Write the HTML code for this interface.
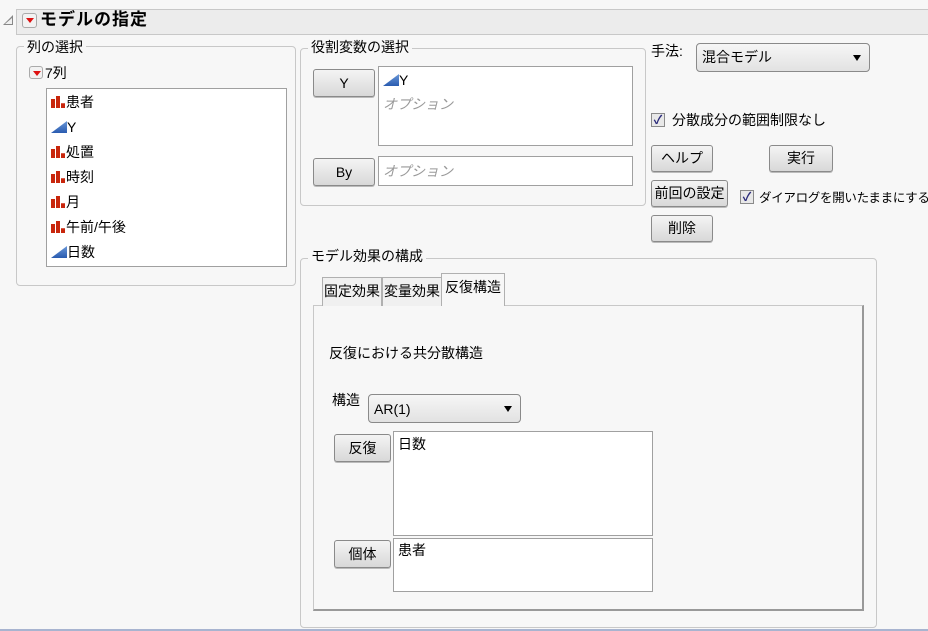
<!DOCTYPE html>
<html><head><meta charset="utf-8"><style>
*{box-sizing:border-box;margin:0;padding:0}
body{width:928px;height:631px;background:#f7f7f7;font-family:"Liberation Sans","Noto Sans CJK JP",sans-serif;font-size:14px;color:#000;position:relative;overflow:hidden}
.a{position:absolute;white-space:nowrap}
.grp{position:absolute;border:1px solid #c8c8c8;border-radius:4px}
.lbl{position:absolute;background:#f7f7f7;padding:0 3px;font-size:14px;line-height:16px}
.btn{position:absolute;border:1px solid #8a8a8a;border-radius:3px;background:linear-gradient(#f4f4f4,#e6e6e6 50%,#d8d8d8);text-align:center;font-size:14px;box-shadow:0 1px 0 #bbb;white-space:nowrap}
.box{position:absolute;background:#fff;border:1px solid #a0a0a0}
.it{position:absolute;left:4px;line-height:18px;white-space:nowrap}
.bar{display:inline-block;width:14px;height:12px;vertical-align:-1px;margin-right:1px;background:linear-gradient(to right,#c8260c 0 4px,transparent 4px 5px,#c8260c 5px 9px,transparent 9px 10px,#c8260c 10px);clip-path:polygon(0 25%,4px 25%,4px 0,9px 0,9px 60%,14px 60%,14px 100%,0 100%)}
.tri{display:inline-block;width:16px;height:12px;vertical-align:-1px;background:linear-gradient(#6a98d8,#2a5cb0);clip-path:polygon(0 100%,100% 0,100% 100%)}
.chk{position:absolute;width:14px;height:14px;border:1px solid #8a8a8a;background:#e8e8e8;font-size:12px;line-height:12px;text-align:center;color:#2a2a7a;font-weight:bold}
.dd{position:absolute;border:1px solid #8a8a8a;border-radius:4px;background:linear-gradient(#f6f6f6,#e2e2e2);padding-left:5px;font-size:14px}
.dd:after{content:"";position:absolute;right:8px;top:11px;border:4px solid transparent;border-top:6px solid #000;border-bottom:0}
.menu{position:absolute;width:15px;height:15px;border:1px solid #aaa;border-radius:3px;background:#f2f2f2}
.menu:after{content:"";position:absolute;left:3px;top:4px;border:4px solid transparent;border-top:5px solid #d11;border-bottom:0}
.tab{position:absolute;border:1px solid #b0b0b0;border-bottom:none;background:#f0f0f0;text-align:center;font-size:14px}
</style></head><body>
<div class="a" style="left:16px;top:9px;width:912px;height:26px;background:#ececec;border:1px solid #c8c8c8;border-right:none"></div>
<div class="a" style="left:3px;top:15px;width:10px;height:10px;background:#888;clip-path:polygon(0 100%,100% 0,100% 100%)"></div>
<div class="a" style="left:5px;top:18px;width:7px;height:6px;background:#f0f0f0;clip-path:polygon(0 100%,100% 0,100% 100%)"></div>
<div class="menu" style="left:22px;top:13px"></div>
<div class="a" style="left:40px;top:9px;font-size:17px;font-weight:bold;line-height:22px;letter-spacing:1px">モデルの指定</div>

<div class="grp" style="left:16px;top:46px;width:280px;height:240px"></div>
<div class="lbl" style="left:24px;top:39px">列の選択</div>
<div class="menu" style="left:29px;top:66px;width:14px;height:13px"></div>
<div class="a" style="left:45px;top:64px;line-height:18px">7列</div>
<div class="box" style="left:46px;top:88px;width:241px;height:179px">
<div class="it" style="top:4px"><span class="bar"></span>患者</div>
<div class="it" style="top:29px"><span class="tri"></span>Y</div>
<div class="it" style="top:54px"><span class="bar"></span>処置</div>
<div class="it" style="top:79px"><span class="bar"></span>時刻</div>
<div class="it" style="top:104px"><span class="bar"></span>月</div>
<div class="it" style="top:129px"><span class="bar"></span>午前/午後</div>
<div class="it" style="top:154px"><span class="tri"></span>日数</div>
</div>

<div class="grp" style="left:300px;top:48px;width:346px;height:158px"></div>
<div class="lbl" style="left:308px;top:39px">役割変数の選択</div>
<div class="btn" style="left:313px;top:69px;width:62px;height:28px;line-height:26px">Y</div>
<div class="box" style="left:378px;top:66px;width:255px;height:80px">
<div class="it" style="top:4px"><span class="tri"></span>Y</div>
<div class="it" style="top:28px;color:#999;font-style:italic">オプション</div></div>
<div class="btn" style="left:313px;top:158px;width:62px;height:28px;line-height:26px">By</div>
<div class="box" style="left:378px;top:156px;width:255px;height:30px"><div class="it" style="top:5px;color:#999;font-style:italic">オプション</div></div>

<div class="a" style="left:651px;top:42px;line-height:18px">手法:</div>
<div class="dd" style="left:696px;top:43px;width:174px;height:29px;line-height:27px">混合モデル</div>
<div class="chk" style="left:651px;top:113px">✓</div>
<div class="a" style="left:672px;top:111px;line-height:18px">分散成分の範囲制限なし</div>
<div class="btn" style="left:651px;top:145px;width:62px;height:27px;line-height:25px">ヘルプ</div>
<div class="btn" style="left:769px;top:145px;width:64px;height:27px;line-height:25px">実行</div>
<div class="btn" style="left:651px;top:180px;width:77px;height:27px;line-height:25px">前回の設定</div>
<div class="chk" style="left:740px;top:190px">✓</div>
<div class="a" style="left:759px;top:189px;line-height:18px;font-size:12.5px;letter-spacing:-0.3px">ダイアログを開いたままにする</div>
<div class="btn" style="left:651px;top:215px;width:62px;height:27px;line-height:25px">削除</div>

<div class="grp" style="left:300px;top:258px;width:577px;height:370px"></div>
<div class="lbl" style="left:308px;top:248px">モデル効果の構成</div>
<div class="a" style="left:313px;top:305px;width:551px;height:306px;background:#f7f7f7;border:1px solid #c8c8c8;border-right:2px solid #999;border-bottom:2px solid #999"></div>
<div class="tab" style="left:322px;top:277px;width:60px;height:29px;line-height:26px">固定効果</div>
<div class="tab" style="left:382px;top:277px;width:60px;height:29px;line-height:26px">変量効果</div>
<div class="tab" style="left:441px;top:273px;width:64px;height:33px;line-height:26px;background:#f7f7f7">反復構造</div>
<div class="a" style="left:329px;top:344px;line-height:18px">反復における共分散構造</div>
<div class="a" style="left:332px;top:391px;line-height:18px">構造</div>
<div class="dd" style="left:368px;top:394px;width:153px;height:29px;line-height:29px">AR(1)</div>
<div class="btn" style="left:334px;top:434px;width:57px;height:28px;line-height:26px">反復</div>
<div class="box" style="left:393px;top:431px;width:260px;height:105px"><div class="it" style="top:3px">日数</div></div>
<div class="btn" style="left:334px;top:540px;width:57px;height:28px;line-height:26px">個体</div>
<div class="box" style="left:393px;top:538px;width:260px;height:54px"><div class="it" style="top:2px">患者</div></div>
<div class="a" style="left:0;top:629px;width:928px;height:2px;background:#a8b4d0"></div>
</body></html>
